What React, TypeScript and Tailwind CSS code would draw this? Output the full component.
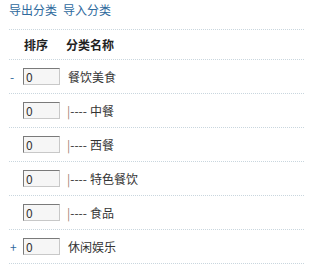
import React from 'react';

const rows = [
  { mark: '-', name: '餐饮美食', child: false },
  { mark: '', name: '中餐', child: true },
  { mark: '', name: '西餐', child: true },
  { mark: '', name: '特色餐饮', child: true },
  { mark: '', name: '食品', child: true },
  { mark: '+', name: '休闲娱乐', child: false },
];

const App = () => {
  return (
    <div
      className="w-[304px] h-[267px] bg-white pl-[9px] text-[12px] text-[#333] overflow-hidden"
      style={{ fontFamily: '"Noto Sans CJK SC", "Liberation Sans", sans-serif' }}
    >
      {/* links */}
      <div className="h-[30px] flex items-start pt-[1px] gap-[6px] text-[#2f6a9d] border-b border-dotted border-[#c9d6de] leading-[18px]">
        <a href="#">导出分类</a>
        <a href="#">导入分类</a>
      </div>

      {/* header */}
      <div className="h-[30px] flex items-center font-bold text-[#222] border-b border-dotted border-[#c9d6de]">
        <div className="w-[14px]" />
        <div className="w-[43px] pl-[1px]">排序</div>
        <div>分类名称</div>
      </div>

      {/* rows */}
      {rows.map((r, i) => (
        <div key={i} className="h-[34px] flex items-center border-b border-dotted border-[#c9d6de]">
          <div className="w-[14px] text-[#2f6a9d] pl-[1px]">{r.mark}</div>
          <input
            defaultValue="0"
            className="w-[37px] h-[17px] px-[2px] text-[12px] leading-[15px] bg-[#f6f6f6] border border-t-[#7a7a7a] border-l-[#7a7a7a] border-r-[#c8c8c8] border-b-[#c8c8c8] text-[#333] outline-none"
          />
          <div className="ml-[7px] flex items-center">
            {r.child && <span className="text-[#9a7f70]">|</span>}
            {r.child && <span className="text-[#333] mr-[3px]">----</span>}
            <span className={r.child ? '' : 'ml-[1px]'}>{r.name}</span>
          </div>
        </div>
      ))}
    </div>
  );
};

export default App;
